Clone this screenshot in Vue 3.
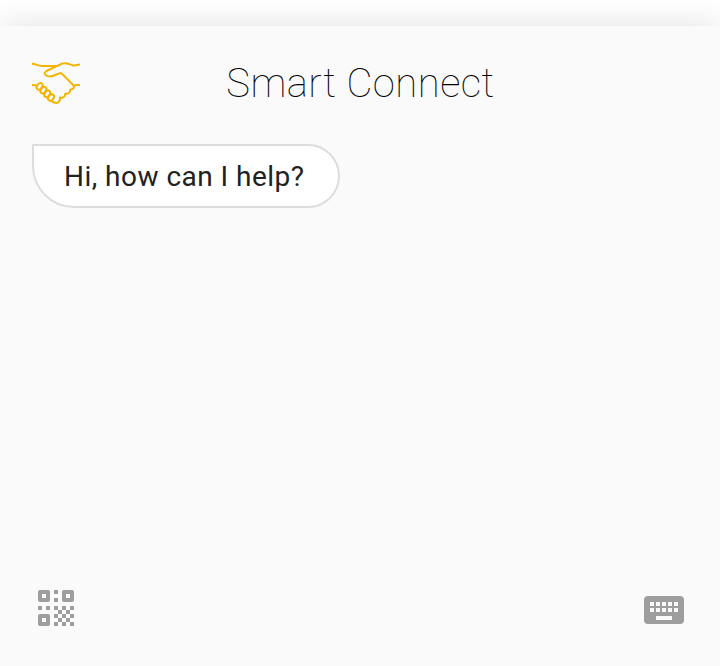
<script setup>
const dots = []
for (let r = 0; r < 5; r++)
  for (let c = 0; c < 5; c++)
    if ((r + c) % 2 === 0) dots.push({ x: 16 + c * 4, y: 16 + r * 4 })
const keys = [0, 1, 2, 3, 4]
const knuckles = [
  { x: 7.6, y: 28.4 },
  { x: 11.4, y: 32.1 },
  { x: 15.2, y: 35.8 },
  { x: 19, y: 39.5 },
]
</script>

<template>
  <div class="page">
    <main class="panel">
      <header class="header">
        <svg class="logo" viewBox="0 0 48 48" fill="none">
          <path d="M0 5.800C4 6.100 6 8 10 8H25M48 6.400C45 6.400 43.500 8.100 40.500 7.200C37 6.100 34 3.900 30 5.700L14.500 13C11.500 14.700 12.500 17 15.500 18.100C20 19.900 24 15.900 29 14.900L41 26.800C42.800 29 41.500 31.800 38.200 31.500C38.500 34.300 36.500 36.300 33.200 35.700C33.300 38.700 31.300 40.300 27.900 39.500C28.500 42.500 26.500 44.900 24 44.900C22 44.900 20.500 43.700 19 42.700M48 27H44C42.800 27 42.500 27.500 42 28M0 27C2 26.700 3 27.300 4.800 27.500"/>
          <ellipse v-for="k in knuckles" :key="k.x" :cx="k.x" :cy="k.y" rx="2.500" ry="3.600" :transform="`rotate(38 ${k.x} ${k.y})`"/>
        </svg>
        <h1>Smart Connect</h1>
      </header>
      <section class="messages">
        <p class="bubble">Hi, how can I help?</p>
      </section>
      <footer class="footer">
        <svg class="qr" viewBox="0 0 36 36">
          <g fill="none" stroke="#9e9e9e" stroke-width="4" stroke-linejoin="round">
            <rect x="2" y="2" width="8" height="8"/>
            <rect x="26" y="2" width="8" height="8"/>
            <rect x="2" y="26" width="8" height="8"/>
          </g>
          <path fill="#9e9e9e" d="M16 0h4v4h-4zM16 8h4v4h-4zM0 16h4v4H0zM8 16h4v4H8z"/>
          <rect v-for="d in dots" :key="`${d.x}-${d.y}`" :x="d.x" :y="d.y" width="4" height="4" fill="#9e9e9e"/>
        </svg>
        <svg class="keyboard" viewBox="0 0 40 28">
          <rect width="40" height="28" rx="4" fill="#9e9e9e"/>
          <g fill="#fafafa">
            <rect v-for="k in keys" :key="k" :x="6 + k * 6" y="6" width="4" height="4"/>
            <rect v-for="k in keys" :key="k" :x="6 + k * 6" y="12" width="4" height="4"/>
            <rect x="12" y="20" width="16" height="4"/>
          </g>
        </svg>
      </footer>
    </main>
  </div>
</template>

<style>
body { background: #fff; }
</style>

<style scoped>
.page {
  height: 666px;
  box-sizing: border-box;
  padding-top: 26px;
  overflow: hidden;
  font-family: Roboto, "Liberation Sans", sans-serif;
}
.panel {
  height: 640px;
  box-sizing: border-box;
  padding: 32px 36px 40px 32px;
  display: flex;
  flex-direction: column;
  background: #fafafa;
  box-shadow: 0 0 32px rgba(0, 0, 0, 0.12);
}
.header {
  display: grid;
  grid-template-columns: 48px 1fr 43px;
  height: 48px;
  align-items: start;
}
.logo {
  width: 48px;
  height: 48px;
  stroke: #f4b400;
  stroke-width: 2;
  stroke-linejoin: round;
}
h1 {
  margin: 0;
  padding-top: 2px;
  text-align: center;
  font-size: 40px;
  line-height: 47px;
  font-weight: 100;
  letter-spacing: 0.5px;
  color: #000;
  white-space: nowrap;
}
.messages {
  flex: 1;
  padding-top: 38px;
}
.bubble {
  margin: 0;
  width: 308px;
  height: 64px;
  box-sizing: border-box;
  padding: 0 30px;
  border: 2px solid #ddd;
  border-radius: 0 32px 32px 42px;
  background: #fff;
  color: #212121;
  font-size: 28px;
  line-height: 61px;
  letter-spacing: 0.47px;
  white-space: nowrap;
}
.footer {
  display: flex;
  justify-content: space-between;
  align-items: flex-end;
  padding-left: 6px;
}
.qr { width: 36px; height: 36px; }
.keyboard { width: 40px; height: 28px; margin-bottom: 2px; }
</style>
